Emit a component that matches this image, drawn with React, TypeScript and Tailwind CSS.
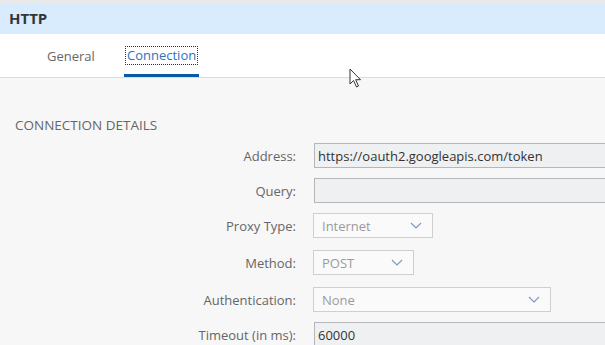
import React from "react";

const font = { fontFamily: '"Open Sans", "Liberation Sans", Arial, sans-serif' };

function Chevron() {
  return (
    <svg width="12" height="7" viewBox="0 0 12 7" className="shrink-0">
      <path d="M1 1 L6 6 L11 1" fill="none" stroke="#7c98c0" strokeWidth="1.1" />
    </svg>
  );
}

function Row({ label, children, mt }: { label: string; children: React.ReactNode; mt: string }) {
  return (
    <div className={`flex items-center h-[25px] ${mt}`}>
      <div className="w-[297px] shrink-0 text-right text-[13px] leading-[18px] text-[#666666] pr-[1px]">{label}</div>
      {children}
    </div>
  );
}

function TextBox({ value }: { value?: string }) {
  return (
    <div className="ml-[17px] h-[25px] w-[320px] shrink-0 border border-[#b4b6b8] bg-[#eff0f1] pl-[3px] flex items-center text-[13px] leading-[18px] text-[#333333]">
      {value}
    </div>
  );
}

function Select({ value, width }: { value: string; width: string }) {
  return (
    <div
      className={`ml-[16px] h-[25px] ${width} shrink-0 border border-[#cfcfcf] bg-[#fafafa] pl-[8px] pr-[10px] flex items-center justify-between text-[13px] leading-[18px] text-[#9a9a9a]`}
    >
      <span>{value}</span>
      <Chevron />
    </div>
  );
}

export default function App() {
  return (
    <div className="w-[605px] h-[345px] overflow-hidden bg-[#f7f7f7] relative" style={font}>
      <div className="h-[3px] bg-[#e9e9e9]" />
      <div className="h-[31px] bg-[#d9ecfd] pl-[9px] flex items-center font-bold text-[15px] text-[#32363a]">
        HTTP
      </div>
      <div className="h-[44px] bg-white border-b border-[#dcdcdc] relative">
        <div className="absolute left-[47px] top-[13px] text-[13px] leading-[18px] text-[#666666]">General</div>
        <div className="absolute left-[125px] top-[12px] px-[1px] border border-dotted border-[#333] text-[13px] leading-[17px] text-[#2f72c0]">
          Connection
        </div>
        <div className="absolute left-[124px] top-[40px] w-[75px] h-[3px] bg-[#0a5aa7]" />
      </div>
      <div className="pt-[39px] pl-[15px] text-[13.5px] text-[#666666] leading-[17px]">CONNECTION DETAILS</div>
      <div className="flex flex-col mt-[9px]">
        <Row label="Address:" mt="mt-0">
          <TextBox value="https://oauth2.googleapis.com/token" />
        </Row>
        <Row label="Query:" mt="mt-[10px]">
          <TextBox />
        </Row>
        <Row label="Proxy Type:" mt="mt-[10px]">
          <Select value="Internet" width="w-[120px]" />
        </Row>
        <Row label="Method:" mt="mt-[12px]">
          <Select value="POST" width="w-[101px]" />
        </Row>
        <Row label="Authentication:" mt="mt-[12px]">
          <Select value="None" width="w-[238px]" />
        </Row>
        <Row label="Timeout (in ms):" mt="mt-[10px]">
          <TextBox value="60000" />
        </Row>
      </div>
      <svg
        className="absolute left-[349px] top-[68px]"
        width="14"
        height="21"
        viewBox="0 0 14 21"
      >
        <path
          d="M1 1 L1 16 L4.5 12.5 L7.5 19 L9.5 18 L6.7 11.7 L11.5 11.7 Z"
          fill="white"
          stroke="#333"
          strokeWidth="1"
          strokeLinejoin="round"
        />
      </svg>
    </div>
  );
}
